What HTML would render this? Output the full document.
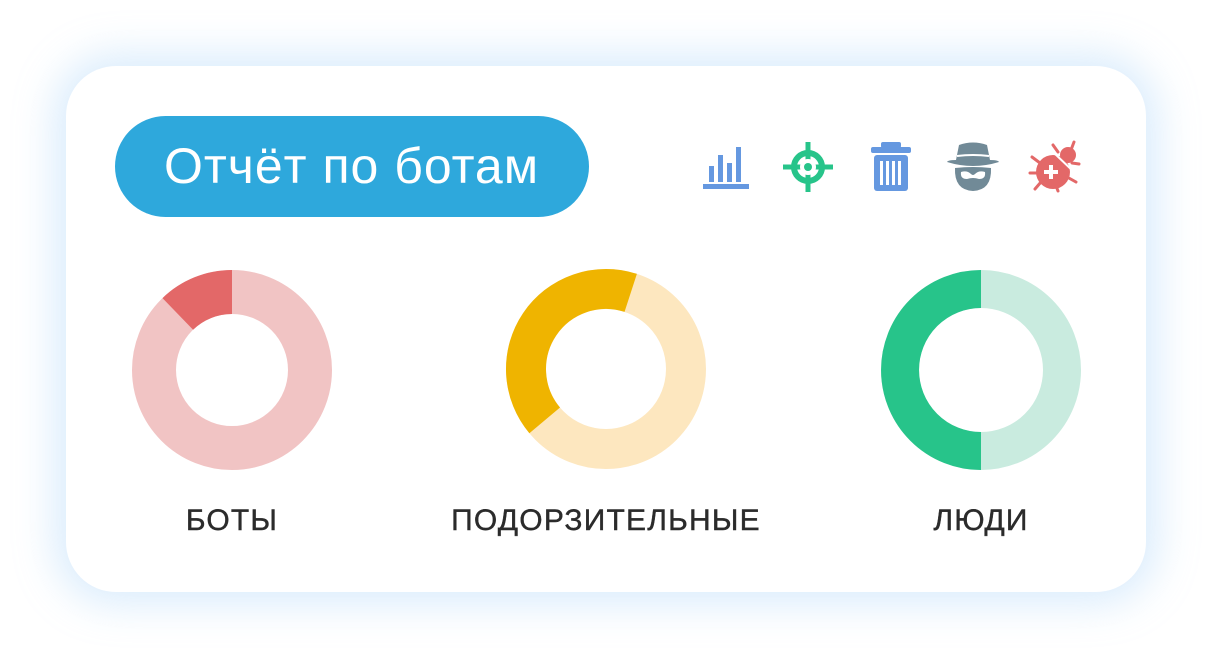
<!DOCTYPE html>
<html><head><meta charset="utf-8"><style>
html,body{margin:0;padding:0;background:#fff;width:1212px;height:659px;overflow:hidden;font-family:"Liberation Sans","DejaVu Sans",sans-serif}
.card{position:absolute;left:66px;top:66px;width:1080px;height:526px;background:#fff;border-radius:50px;box-shadow:0 0 40px 12px rgba(150,200,245,0.35)}
.btn{position:absolute;left:115px;top:116px;width:474px;height:101px;border-radius:51px;background:#2ea8dc;color:#fff;font-size:50px;line-height:101px;box-sizing:border-box;padding-left:49px;letter-spacing:1px;white-space:nowrap}
.lbl{position:absolute;top:504px;font-size:30px;color:#2b2b2b;text-align:center;width:400px;letter-spacing:1.2px;-webkit-text-stroke:0.4px #2b2b2b}
svg{position:absolute;left:0;top:0}
</style></head><body>
<div class="card"></div>
<div class="btn">Отчёт по ботам</div>
<svg width="1212" height="659">
<circle cx="232" cy="370" r="78" fill="none" stroke="#f1c4c4" stroke-width="44"/>
<path d="M177.8,313.9 A78 78 0 0 1 232,292" fill="none" stroke="#e36868" stroke-width="44"/>
<circle cx="606" cy="369" r="80" fill="none" stroke="#fde7bf" stroke-width="40"/>
<path d="M544.7,420.4 A80 80 0 0 1 630.7,292.9" fill="none" stroke="#efb400" stroke-width="40"/>
<circle cx="981" cy="370" r="81" fill="none" stroke="#c9ebdf" stroke-width="38"/>
<path d="M981,289 A81 81 0 0 0 981,451" fill="none" stroke="#27c48a" stroke-width="38"/>
<g fill="#6598e0">
<rect x="703" y="184" width="46" height="5"/>
<rect x="709" y="166" width="5" height="16"/>
<rect x="718" y="155" width="5" height="27"/>
<rect x="727" y="163" width="5" height="19"/>
<rect x="736" y="147" width="5" height="35"/>
</g>
<g stroke="#27c48a" fill="none">
<circle cx="808" cy="167" r="14" stroke-width="6"/>
<line x1="808" y1="142" x2="808" y2="192" stroke-width="5"/>
<line x1="783" y1="167" x2="833" y2="167" stroke-width="5"/>
</g>
<circle cx="808" cy="167" r="8" fill="#fff"/>
<circle cx="808" cy="167" r="4" fill="#27c48a"/>
<g fill="#6598e0">
<rect x="881" y="142" width="20" height="6" rx="2"/>
<rect x="871" y="147" width="40" height="6" rx="2"/>
<rect x="874" y="155" width="34" height="36" rx="3"/>
</g>
<g fill="#fff"><rect x="880" y="161" width="3" height="24"/><rect x="886" y="161" width="3" height="24"/><rect x="892" y="161" width="3" height="24"/><rect x="898" y="161" width="3" height="24"/></g>
<g fill="#718a97">
<path d="M959,145 Q973,140 987,145 L990,160 Q998,160 999,162 Q973,170 947,162 Q948,160 956,160 Z"/>
<path d="M955,168 Q973,166 991,168 Q992,190 973,191 Q954,190 955,168 Z"/>
</g>
<path d="M957,156 Q973,154 989,156" stroke="#fff" stroke-width="2" fill="none"/>
<path d="M961,172 Q967,170 971,174 Q973,176 975,174 Q979,170 985,172 Q986,179 979,179 Q973,177 967,179 Q960,179 961,172 Z" fill="#fff"/>
<g stroke="#e36868" stroke-width="3" stroke-linecap="round">
<line x1="1032" y1="157" x2="1040" y2="163"/><line x1="1030" y1="173" x2="1038" y2="173"/><line x1="1035" y1="189" x2="1041" y2="182"/>
<line x1="1058" y1="191" x2="1055" y2="183"/><line x1="1076" y1="182" x2="1067" y2="177"/><line x1="1079" y1="164" x2="1072" y2="163"/>
<line x1="1053" y1="145" x2="1058" y2="152"/><line x1="1074" y1="142" x2="1071" y2="150"/>
</g>
<circle cx="1068" cy="155" r="8" fill="#e36868"/>
<circle cx="1053" cy="172" r="17" fill="#e36868"/>
<line x1="1053" y1="152" x2="1075" y2="173" stroke="#fff" stroke-width="2"/>
<g fill="#fff"><rect x="1049" y="165" width="4" height="14"/><rect x="1044" y="170" width="14" height="4"/></g>
</svg>
<div class="lbl" style="left:32px">БОТЫ</div>
<div class="lbl" style="left:406px">ПОДОРЗИТЕЛЬНЫЕ</div>
<div class="lbl" style="left:781px">ЛЮДИ</div>
</body></html>
